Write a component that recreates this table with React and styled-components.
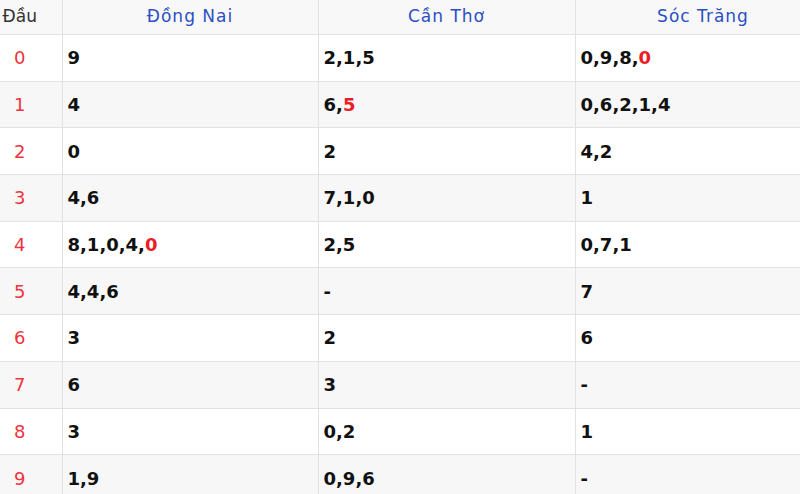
import React from "react";
import styled, { createGlobalStyle } from "styled-components";

const GlobalStyle = createGlobalStyle`
  html, body {
    margin: 0;
    padding: 0;
    background: #fff;
    overflow: hidden;
  }
  body {
    font-family: "DejaVu Sans", "Liberation Sans", Arial, sans-serif;
  }
`;

const Wrapper = styled.div`
  width: 800px;
  height: 494px;
  overflow: hidden;
`;

const Table = styled.table`
  width: 831px;
  border-collapse: collapse;
  table-layout: fixed;
`;

const HeadCell = styled.th`
  height: 32px;
  padding: 0 0 2px;
  font-size: 17px;
  letter-spacing: 1px;
  font-weight: normal;
  text-align: center;
  background: #f8f8f8;
  color: ${(p) => (p.$first ? "#333" : "#2b4fc4")};
  border: 1px solid #e2e2e2;
  border-top: none;
  ${(p) => p.$first && "border-left: none; padding-right: 22px; letter-spacing: 0;"}
`;

const Row = styled.tr`
  background: ${(p) => (p.$odd ? "#f7f7f7" : "#fff")};
`;

const HeadDigit = styled.td`
  height: 45.7px;
  padding: 0 22px 0 0;
  text-align: center;
  font-size: 18px;
  color: #f0333d;
  border: 1px solid #e2e2e2;
  border-left: none;
`;

const Cell = styled.td`
  height: 45.7px;
  padding: 0 5px;
  font-size: 18px;
  font-weight: bold;
  color: #111;
  border: 1px solid #e2e2e2;
`;

const Hit = styled.span`
  color: #ee1c24;
`;

const provinces = ["Đồng Nai", "Cần Thơ", "Sóc Trăng"];

// "*" marks the red (special) number
const rows = [
  ["9", "2,1,5", "0,9,8,*0"],
  ["4", "6,*5", "0,6,2,1,4"],
  ["0", "2", "4,2"],
  ["4,6", "7,1,0", "1"],
  ["8,1,0,4,*0", "2,5", "0,7,1"],
  ["4,4,6", "-", "7"],
  ["3", "2", "6"],
  ["6", "3", "-"],
  ["3", "0,2", "1"],
  ["1,9", "0,9,6", "-"],
];

const Numbers = ({ value }) => {
  const idx = value.indexOf("*");
  if (idx < 0) return value;
  return (
    <>
      {value.slice(0, idx)}
      <Hit>{value.slice(idx + 1)}</Hit>
    </>
  );
};

export default function App() {
  return (
    <Wrapper>
      <GlobalStyle />
      <Table>
        <colgroup>
          <col style={{ width: 62 }} />
          <col style={{ width: 256 }} />
          <col style={{ width: 257 }} />
          <col style={{ width: 256 }} />
        </colgroup>
        <thead>
          <tr>
            <HeadCell $first>Đầu</HeadCell>
            {provinces.map((p) => (
              <HeadCell key={p}>{p}</HeadCell>
            ))}
          </tr>
        </thead>
        <tbody>
          {rows.map((r, i) => (
            <Row key={i} $odd={i % 2 === 1}>
              <HeadDigit>{i}</HeadDigit>
              {r.map((v, j) => (
                <Cell key={j}>
                  <Numbers value={v} />
                </Cell>
              ))}
            </Row>
          ))}
        </tbody>
      </Table>
    </Wrapper>
  );
}
